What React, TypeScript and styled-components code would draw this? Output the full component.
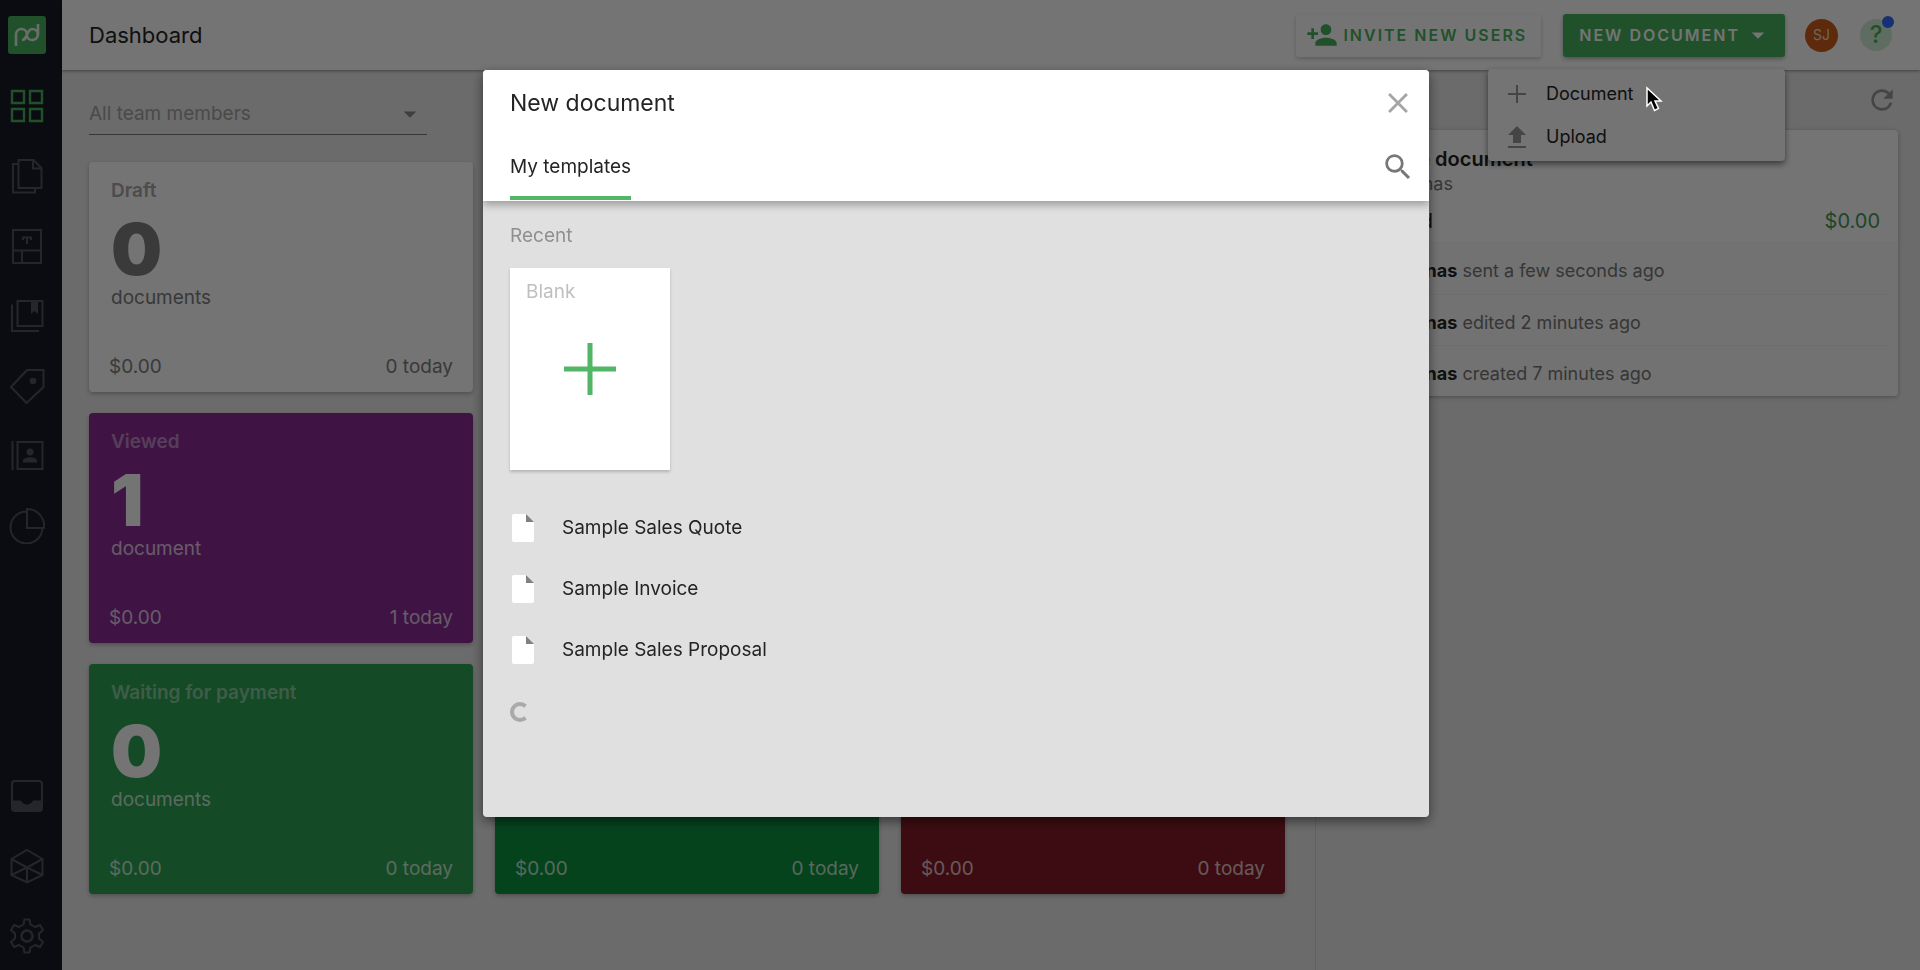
import React from 'react';
import styled, { createGlobalStyle } from 'styled-components';
import {
  MdPersonAdd, MdArrowDropDown, MdRefresh, MdClose, MdSearch,
} from 'react-icons/md';

const GlobalStyle = createGlobalStyle`
  * { box-sizing: border-box; }
  html, body, #root { height: 100%; }
  body {
    margin: 0;
    background: #ebebeb;
    color: #242424;
    font-family: Inter, "Liberation Sans", sans-serif;
    font-size: 19px;
    line-height: 24px;
  }
  button, select { font: inherit; color: inherit; border: 0; background: none; padding: 0; margin: 0; }
  h1, h2, h3, p, ul { margin: 0; padding: 0; font-size: inherit; font-weight: 400; }
  ul { list-style: none; }
  svg { display: block; flex: none; }
`;

const Page = styled.div`
  display: flex;
  min-height: 100%;
`;

const Sidebar = styled.nav`
  display: flex;
  flex-direction: column;
  justify-content: space-between;
  width: 62px;
  flex: none;
  padding: 16px 16px 16px 8px;
  background: #181c26;
`;

const NavGroup = styled.div`
  display: flex;
  flex-direction: column;
  align-items: center;
  gap: 34px;
`;

const NavLink = styled.a<{ $active?: boolean }>`
  display: block;
  color: ${(p) => (p.$active ? '#47b35f' : '#50545c')};
`;

const Logo = styled.a`
  display: grid;
  place-items: center;
  width: 38px;
  height: 38px;
  border-radius: 3px;
  background: #47b35f;
  color: #e4f2e6;
`;

const Content = styled.div`
  flex: 1;
  min-width: 0;
  display: flex;
  flex-direction: column;
`;

const TopBar = styled.header`
  position: relative;
  display: flex;
  align-items: center;
  justify-content: space-between;
  height: 70px;
  padding: 0 28px 0 27px;
  background: #fff;
  box-shadow: 0 1px 3px rgba(0, 0, 0, 0.4);
`;

const PageTitle = styled.h1`
  font-size: 22px;
`;

const Actions = styled.div`
  display: flex;
  align-items: center;
`;

const ActionButton = styled.button<{ $primary?: boolean }>`
  display: flex;
  align-items: center;
  gap: ${(p) => (p.$primary ? '3px' : '5px')};
  height: 43px;
  padding: ${(p) => (p.$primary ? '0 12px 0 16px' : '0 14px 0 10px')};
  border-radius: 3px;
  font-size: 16px;
  font-weight: 600;
  letter-spacing: 2px;
  white-space: nowrap;
  color: ${(p) => (p.$primary ? '#fff' : '#47b35f')};
  background: ${(p) => (p.$primary ? '#47b35f' : '#fff')};
  box-shadow: 0 2px 4px ${(p) => (p.$primary ? 'rgba(0, 0, 0, 0.3)' : 'rgba(0, 0, 0, 0.2)')};
`;

const MenuAnchor = styled.div`
  position: relative;
  margin: 0 20px 0 22px;
`;

const Menu = styled.ul`
  position: absolute;
  z-index: 1;
  top: 55px;
  right: 0;
  width: 297px;
  padding: 4px 0 2px;
  border-radius: 4px;
  background: #fff;
  box-shadow: 0 3px 6px rgba(0, 0, 0, 0.5);
`;

const MenuItem = styled.button`
  display: grid;
  grid-template-columns: 24px 1fr;
  align-items: center;
  gap: 17px;
  width: 100%;
  height: 43px;
  padding: 0 17px;
  font-size: 18px;
  text-align: left;
  color: #242424;

  svg { color: #999; }
`;

const Avatar = styled.button`
  width: 33px;
  height: 33px;
  border-radius: 50%;
  background: #cc5c1a;
  color: #f0e0d6;
  font-size: 14px;
`;

const Help = styled.button`
  position: relative;
  width: 32px;
  height: 32px;
  margin-left: 22px;
  border-radius: 50%;
  background: #cfeed7;
  color: #47b35f;
  font-size: 24px;
  font-weight: 500;
`;

const HelpDot = styled.span`
  position: absolute;
  top: -3px;
  right: -2px;
  width: 12px;
  height: 12px;
  border-radius: 50%;
  background: #2f6bff;
`;

const Columns = styled.div`
  flex: 1;
  display: grid;
  grid-template-columns: minmax(0, 1253fr) minmax(0, 605fr);
`;

const Board = styled.main`
  padding: 24px 30px 75px 27px;
`;

const TeamFilter = styled.label`
  position: relative;
  display: flex;
  align-items: center;
  width: 338px;
  height: 41px;
  margin-bottom: 27px;
  border-bottom: 1px solid #777;
  color: #a4a4a4;

  select { width: 100%; appearance: none; outline: 0; }
  svg { position: absolute; right: 2px; pointer-events: none; color: #888; }
`;

const CardGrid = styled.div`
  display: grid;
  grid-template-columns: repeat(3, 1fr);
  grid-template-rows: repeat(3, 230px);
  gap: 21px 22px;
`;

const StatusCard = styled.section<{ $bg: string; $row: number; $column: number; $light?: boolean }>`
  grid-row: ${(p) => p.$row};
  grid-column: ${(p) => p.$column};
  display: flex;
  flex-direction: column;
  padding: 17px 22px 13px;
  border-radius: 4px;
  background: ${(p) => p.$bg};
  color: ${(p) => (p.$light ? '#7d7d7d' : 'rgba(255, 255, 255, 0.75)')};
  box-shadow: 0 2px 4px rgba(0, 0, 0, 0.25);
`;

const CardTitle = styled.h2<{ $light?: boolean }>`
  font-weight: 600;
  color: ${(p) => (p.$light ? '#a8a8a8' : 'rgba(255, 255, 255, 0.45)')};
`;

const Count = styled.strong<{ $light?: boolean }>`
  margin: 10px 0 1px;
  font-size: 72px;
  line-height: 72px;
  font-weight: 900;
  color: ${(p) => (p.$light ? '#808080' : '#fff')};
`;

const CardFooter = styled.div`
  display: flex;
  justify-content: space-between;
  margin: auto -2px 0;
`;

const Activity = styled.aside`
  padding: 14px 22px 0 20px;
  border-left: 1px solid #d6d6d6;
`;

const RefreshRow = styled.div`
  display: flex;
  justify-content: flex-end;
  align-items: flex-start;
  height: 46px;
  color: #999;
`;

const ActivityCard = styled.article`
  border-radius: 4px;
  background: #fff;
  box-shadow: 0 1px 4px rgba(0, 0, 0, 0.3);
`;

const ActivityHead = styled.div`
  padding: 17px 18px 9px 22px;
  border-bottom: 1px solid #f6f6f6;

  h3 { font-size: 20px; font-weight: 600; }
  p { margin-top: 1px; font-size: 18px; color: #777; }
`;

const AmountRow = styled.div`
  display: flex;
  justify-content: space-between;
  margin-top: 13px;
  font-size: 20px;
`;

const Amount = styled.span`
  color: #3f9a5c;
`;

const EventList = styled.ul`
  padding: 0 10px 0 24px;
  background: #fafafa;
  border-radius: 0 0 4px 4px;
`;

const EventRow = styled.li`
  height: 51px;
  padding-top: 16px;
  font-size: 18px;
  color: #777;

  & + & { border-top: 1px solid #f0f0f0; }
  b { color: #242424; }
`;

const Overlay = styled.div`
  position: fixed;
  inset: 0;
  z-index: 5;
  display: flex;
  align-items: flex-start;
  justify-content: center;
  padding: 70px 8px 0 0;
  background: rgba(0, 0, 0, 0.545);
`;

const Modal = styled.div`
  width: 946px;
  border-radius: 4px;
  overflow: hidden;
  background: #e0e0e0;
  box-shadow: 0 4px 12px rgba(0, 0, 0, 0.5);
`;

const ModalHead = styled.header`
  padding: 17px 14px 0 27px;
  background: #fff;
  box-shadow: 0 4px 8px rgba(0, 0, 0, 0.3);
`;

const ModalRow = styled.div`
  display: flex;
  align-items: center;
  justify-content: space-between;
  height: 32px;

  h2 { font-size: 23px; }
`;

const IconButton = styled.button<{ $dark?: boolean }>`
  color: ${(p) => (p.$dark ? '#777' : '#a5a5a5')};
`;

const TabRow = styled.div`
  display: flex;
  justify-content: space-between;
  align-items: center;
  margin-top: 15px;
  padding-bottom: 1px;
`;

const Tab = styled.button`
  height: 66px;
  padding-top: 4px;
  border-bottom: 4px solid #53b566;
`;

const ModalBody = styled.div`
  min-height: 616px;
  padding: 23px 27px;
`;

const Recent = styled.h3`
  margin-bottom: 20px;
  color: #909090;
`;

const BlankCard = styled.button`
  display: flex;
  flex-direction: column;
  justify-content: space-between;
  align-items: center;
  width: 160px;
  height: 202px;
  margin-bottom: 27px;
  padding: 12px 16px 75px;
  background: #fff;
  box-shadow: 0 2px 3px rgba(0, 0, 0, 0.2);

  span { align-self: flex-start; color: #bfbfbf; }
`;

const TemplateRow = styled.button`
  display: flex;
  align-items: center;
  gap: 28px;
  height: 61px;
  padding-left: 2px;
`;

const Spinner = styled.div`
  padding-top: 22px;
`;

const Cursor = styled.svg`
  position: fixed;
  z-index: 10;
  left: 1645px;
  top: 86px;
`;

const NavIcon = ({ children }: { children: React.ReactNode }) => (
  <svg width="36" height="36" viewBox="0 0 36 36" fill="none" stroke="currentColor" strokeWidth="2">
    {children}
  </svg>
);

const DashboardIcon = () => (
  <NavIcon><path d="M3 3h12v12H3zM21 3h12v12H21zM3 21h12v12H3zM21 21h12v12H21z" strokeWidth="2.4" /></NavIcon>
);
const DocumentsIcon = () => (
  <NavIcon><path d="M9.500 2h15l8 8v20h-23zM24 2.500V10.500h8M9 6H4v28.500h22V31" /></NavIcon>
);
const FormsIcon = () => (
  <NavIcon><path d="M4 2h28v33H4zM4 22.500h28M13 22.500V35" /><path d="M14 12V9.500h8V12M18 9.500V16" /></NavIcon>
);
const LibraryIcon = () => (
  <NavIcon><path d="M8.500 3h25v25h-25zM3 6.500V33h27" /><path d="M22 3h7v13l-3.500-3-3.500 3z" fill="currentColor" stroke="none" /></NavIcon>
);
const TagIcon = () => (
  <NavIcon><path d="M18 2h16.500v17L17.500 35 2 19z" /><circle cx="24" cy="13" r="3.300" fill="currentColor" stroke="none" /></NavIcon>
);
const ContactsIcon = () => (
  <NavIcon>
    <path d="M8.500 4h25v27h-25zM3.500 3v29" />
    <g fill="currentColor" stroke="none"><circle cx="21" cy="14" r="3.500" /><path d="M14 24.500v-1.500c0-5 14-5 14 0v1.500z" /></g>
  </NavIcon>
);
const ReportsIcon = () => (
  <NavIcon><path d="M17 3.500A16 16 0 1 0 33.500 20M18 1A17 17 0 0 1 35 20H18z" /></NavIcon>
);
const InboxIcon = () => (
  <NavIcon>
    <rect x="3" y="3" width="30" height="30" rx="3" />
    <path d="M3 22.500h9c2 5.500 10 5.500 12 0h9V33H3z" fill="currentColor" stroke="none" />
  </NavIcon>
);
const CubeIcon = () => (
  <NavIcon><path d="M18 2l15.500 9v16L18 34.500 2.500 27V11zM2.500 11 18 19.500 33.500 11M18 19.500V34M18 19.500 2.500 27M18 19.500 33.500 27" /></NavIcon>
);
const SettingsIcon = () => (
  <NavIcon>
    <path d="M15.500 1.500h5l1 5 4.500 2.500 5-2 3 5-4 3.500v5l4 3.500-3 5-5-2-4.500 2.500-1 5h-5l-1-5L10 27l-5 2-3-5 4-3.500v-5L2 12l3-5 5 2 4.500-2.500z" strokeLinejoin="round" />
    <circle cx="18" cy="18" r="5.500" strokeWidth="2.500" />
  </NavIcon>
);

const FileIcon = () => (
  <svg width="22" height="28" viewBox="0 0 22 28">
    <path d="M2 0h12l8 8v18a2 2 0 0 1-2 2H2a2 2 0 0 1-2-2V2a2 2 0 0 1 2-2z" fill="#fff" />
    <path d="M14 0l8 8h-8z" fill="#808080" />
  </svg>
);

interface Status {
  title?: string;
  count?: number;
  unit?: string;
  today: number;
  bg: string;
  row: number;
  column: number;
  light?: boolean;
}

const statuses: Status[] = [
  { title: 'Draft', count: 0, unit: 'documents', today: 0, bg: '#fff', row: 1, column: 1, light: true },
  { title: 'Viewed', count: 1, unit: 'document', today: 1, bg: '#8c2d98', row: 2, column: 1 },
  { title: 'Waiting for payment', count: 0, unit: 'documents', today: 0, bg: '#30a455', row: 3, column: 1 },
  { today: 0, bg: '#0c9440', row: 3, column: 2 },
  { today: 0, bg: '#861c2a', row: 3, column: 3 },
];

const events = ['sent a few seconds ago', 'edited 2 minutes ago', 'created 7 minutes ago'];
const templates = ['Sample Sales Quote', 'Sample Invoice', 'Sample Sales Proposal'];

export default function App() {
  return (
    <>
      <GlobalStyle />
      <Page>
        <Sidebar>
          <NavGroup>
            <Logo href="#" aria-label="Home">
              <svg width="26" height="24" viewBox="0 0 26 24" fill="none" stroke="currentColor" strokeWidth="2.600">
                <path d="M2 23V11.500a5.500 5.500 0 1 1 6 5.500c5 0 5-11 10-11a5.500 5.500 0 1 1-5 7M24 1v10.500a5.500 5.500 0 0 1-6 5.500" />
              </svg>
            </Logo>
            <NavLink href="#" $active aria-label="Dashboard"><DashboardIcon /></NavLink>
            <NavLink href="#" aria-label="Documents"><DocumentsIcon /></NavLink>
            <NavLink href="#" aria-label="Templates"><FormsIcon /></NavLink>
            <NavLink href="#" aria-label="Content library"><LibraryIcon /></NavLink>
            <NavLink href="#" aria-label="Catalog"><TagIcon /></NavLink>
            <NavLink href="#" aria-label="Contacts"><ContactsIcon /></NavLink>
            <NavLink href="#" aria-label="Reports"><ReportsIcon /></NavLink>
          </NavGroup>
          <NavGroup>
            <NavLink href="#" aria-label="Inbox"><InboxIcon /></NavLink>
            <NavLink href="#" aria-label="Integrations"><CubeIcon /></NavLink>
            <NavLink href="#" aria-label="Settings"><SettingsIcon /></NavLink>
          </NavGroup>
        </Sidebar>
        <Content>
          <TopBar>
            <PageTitle>Dashboard</PageTitle>
            <Actions>
              <ActionButton><MdPersonAdd size={32} />INVITE NEW USERS</ActionButton>
              <MenuAnchor>
                <ActionButton $primary>NEW DOCUMENT<MdArrowDropDown size={30} /></ActionButton>
                <Menu>
                  <li>
                    <MenuItem>
                      <svg width="24" height="24" viewBox="0 0 24 24" stroke="currentColor" strokeWidth="2">
                        <path d="M12 3v18M3 12h18" />
                      </svg>
                      Document
                    </MenuItem>
                  </li>
                  <li>
                    <MenuItem>
                      <svg width="24" height="24" viewBox="0 0 24 24" fill="currentColor">
                        <path d="M3 21h18v2H3zM8 18V10H3l9-9 9 9h-5v8z" />
                      </svg>
                      Upload
                    </MenuItem>
                  </li>
                </Menu>
              </MenuAnchor>
              <Avatar>SJ</Avatar>
              <Help aria-label="Help">?<HelpDot /></Help>
            </Actions>
          </TopBar>
          <Columns>
            <Board>
              <TeamFilter>
                <select aria-label="Team members"><option>All team members</option></select>
                <MdArrowDropDown size={30} />
              </TeamFilter>
              <CardGrid>
                {statuses.map((s) => (
                  <StatusCard key={s.bg} $bg={s.bg} $row={s.row} $column={s.column} $light={s.light}>
                    {s.title && (
                      <>
                        <CardTitle $light={s.light}>{s.title}</CardTitle>
                        <Count $light={s.light}>{s.count}</Count>
                        <span>{s.unit}</span>
                      </>
                    )}
                    <CardFooter><span>$0.00</span><span>{s.today} today</span></CardFooter>
                  </StatusCard>
                ))}
              </CardGrid>
            </Board>
            <Activity>
              <RefreshRow><button aria-label="Refresh"><MdRefresh size={32} /></button></RefreshRow>
              <ActivityCard>
                <ActivityHead>
                  <h3>Sample document</h3>
                  <p>Sara Jonas</p>
                  <AmountRow><span>Opened</span><Amount>$0.00</Amount></AmountRow>
                </ActivityHead>
                <EventList>
                  {events.map((e) => <EventRow key={e}><b>Sara Jonas</b> {e}</EventRow>)}
                </EventList>
              </ActivityCard>
            </Activity>
          </Columns>
        </Content>
      </Page>
      <Overlay>
        <Modal role="dialog" aria-label="New document">
          <ModalHead>
            <ModalRow>
              <h2>New document</h2>
              <IconButton aria-label="Close"><MdClose size={34} /></IconButton>
            </ModalRow>
            <TabRow>
              <Tab>My templates</Tab>
              <IconButton $dark aria-label="Search"><MdSearch size={34} /></IconButton>
            </TabRow>
          </ModalHead>
          <ModalBody>
            <Recent>Recent</Recent>
            <BlankCard>
              <span>Blank</span>
              <svg width="52" height="52" viewBox="0 0 52 52" stroke="#53b566" strokeWidth="5"><path d="M26 0v52M0 26h52" /></svg>
            </BlankCard>
            <ul>
              {templates.map((t) => <li key={t}><TemplateRow><FileIcon />{t}</TemplateRow></li>)}
            </ul>
            <Spinner>
              <svg width="20" height="20" viewBox="0 0 20 20" fill="none" stroke="#aaa" strokeWidth="4"><path d="M15.500 4.200a8 8 0 1 0 0 11.600" /></svg>
            </Spinner>
          </ModalBody>
        </Modal>
      </Overlay>
      <Cursor width="20" height="28" viewBox="0 0 20 28">
        <path d="M2 2v18l4-4 3.500 8.500 4-2L10 15h6z" fill="#000" stroke="#fff" strokeWidth="1.500" />
      </Cursor>
    </>
  );
}
